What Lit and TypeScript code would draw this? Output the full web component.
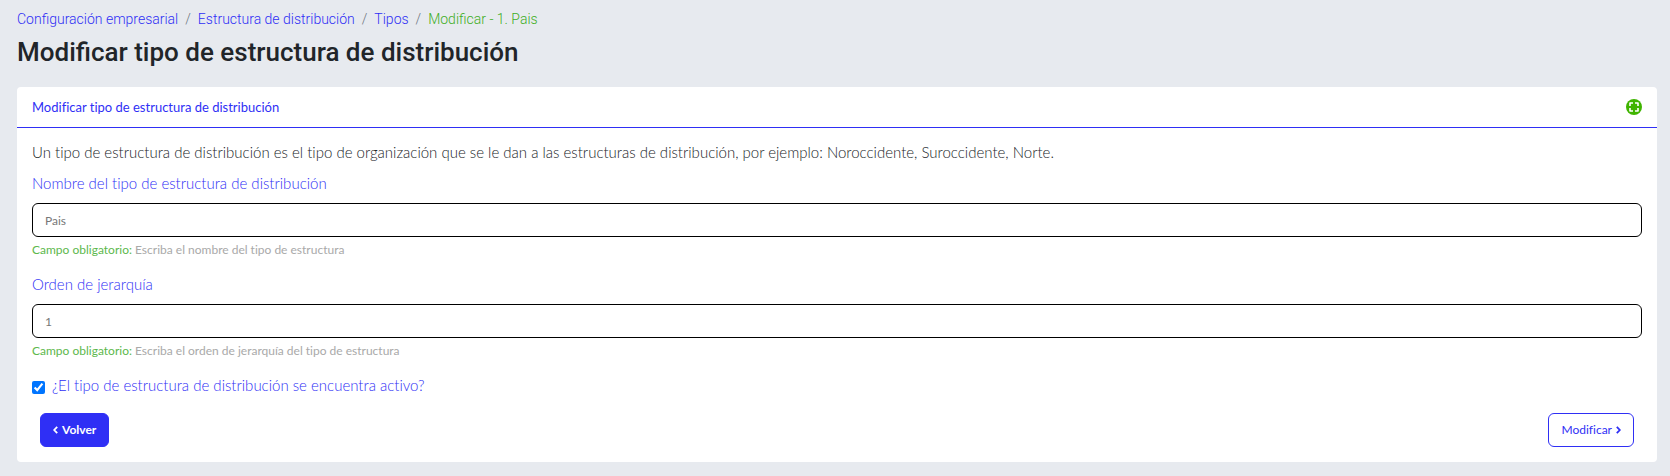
import { LitElement, html, css } from "lit";
import { customElement, property, state } from "lit/decorators.js";

@customElement("form-field")
class FormField extends LitElement {
  static styles = css`
    :host { display: block; }
    label { display: block; margin-bottom: 9px; font-size: 15px; line-height: 22px; color: #2f2ff5; }
    input {
      display: block; box-sizing: border-box; width: 100%; height: 34px; padding: 0 12px;
      border: 1px solid #000; border-radius: 6px; background: #fff;
      font: 400 12px/18px Lato, sans-serif; color: #777; outline: none;
    }
    .help { margin: 4px 0 0; font-size: 12px; line-height: 18px; font-weight: 400; color: #a9a9a9; }
    .required { color: #5cb84c; }
  `;
  @property() label = "";
  @property() value = "";
  @property() help = "";

  render() {
    return html`
      <label for="control">${this.label}</label>
      <input id="control" type="text" .value=${this.value} aria-describedby="help" />
      <p class="help" id="help"><span class="required">Campo obligatorio:</span> ${this.help}</p>
    `;
  }
}

@customElement("app-root")
class AppRoot extends LitElement {
  static styles = css`
    :host {
      display: block; box-sizing: border-box; min-height: 100vh; padding: 9px 13px 14px 17px;
      background: #e7eaef; color: #212529;
      font: 300 15px/22px Lato, sans-serif; font-variant-ligatures: none;
    }
    a { color: #2f2ff5; text-decoration: none; }
    .crumbs {
      display: flex; flex-wrap: wrap; gap: 7px; margin: 0; padding: 0; list-style: none;
      font: 300 14px/20px Roboto, sans-serif;
    }
    .crumbs li { display: flex; gap: 7px; }
    .crumbs li + li::before { content: "/"; color: #6c757d; }
    .current { color: #3fae1f; }
    h1 { margin: 6px 0 18px; font: 500 26px/34px Roboto, sans-serif; }
    .card { border-radius: 4px; background: #fff; }
    .head {
      display: flex; align-items: center; justify-content: space-between;
      height: 40px; padding: 0 15px; border-bottom: 1px solid #2f2ff5;
    }
    h2 { margin: 0; font: 400 13px/20px Lato, sans-serif; font-variant-ligatures: none; color: #2f2ff5; }
    .focus { display: flex; padding: 0; border: 0; background: none; }
    form { display: flex; flex-direction: column; gap: 14px; padding: 13px 15px 15px; }
    .intro { margin: 0 0 -5px; }
    .active { display: flex; align-items: center; gap: 7px; color: #2f2ff5; }
    .active input { width: 13px; height: 13px; margin: 4px 0 0; accent-color: #0075ff; }
    .actions { display: flex; justify-content: space-between; padding: 3px 8px 0; }
    .btn {
      display: flex; align-items: center; gap: 4px; box-sizing: border-box; height: 34px; padding: 0 12px;
      border: 1px solid #2f2ff5; border-radius: 6px; background: #fff; color: #2f2ff5;
      font: 400 12px/18px Lato, sans-serif; font-variant-ligatures: none;
    }
    .primary { background: #2f2ff5; color: #fff; font-weight: 700; }
  `;
  @state() private active = true;

  render() {
    return html`
      <nav aria-label="Ruta">
        <ol class="crumbs">
          <li><a href="#">Configuración empresarial</a></li>
          <li><a href="#">Estructura de distribución</a></li>
          <li><a href="#">Tipos</a></li>
          <li><span class="current" aria-current="page">Modificar - 1. Pais</span></li>
        </ol>
      </nav>
      <h1>Modificar tipo de estructura de distribución</h1>
      <section class="card">
        <header class="head">
          <h2>Modificar tipo de estructura de distribución</h2>
          <button class="focus" type="button" aria-label="Pantalla completa">
            <svg width="16" height="16" viewBox="0 0 16 16">
              <circle cx="8" cy="8" r="8" fill="#3fb400" />
              <path d="M4 7V4H7M9 4H12V7M12 9V12H9M7 12H4V9" fill="none" stroke="#fff" stroke-width="1.6" stroke-linejoin="round" />
            </svg>
          </button>
        </header>
        <form @submit=${(e: Event) => e.preventDefault()}>
          <p class="intro">Un tipo de estructura de distribución es el tipo de organización que se le dan a las estructuras de distribución, por ejemplo: Noroccidente, Suroccidente, Norte.</p>
          <form-field label="Nombre del tipo de estructura de distribución" value="Pais" help="Escriba el nombre del tipo de estructura"></form-field>
          <form-field label="Orden de jerarquía" value="1" help="Escriba el orden de jerarquía del tipo de estructura"></form-field>
          <label class="active">
            <input type="checkbox" .checked=${this.active} @change=${(e: Event) => (this.active = (e.target as HTMLInputElement).checked)} />
            <span>¿El tipo de estructura de distribución se encuentra activo?</span>
          </label>
          <div class="actions">
            <button class="btn primary" type="button">
              <svg width="5" height="8" viewBox="0 0 5 8"><path d="M4.2 0.8L1.2 4L4.2 7.2" fill="none" stroke="currentColor" stroke-width="1.8" /></svg>
              Volver
            </button>
            <button class="btn" type="submit">
              Modificar
              <svg width="5" height="8" viewBox="0 0 5 8"><path d="M0.8 0.8L3.8 4L0.8 7.2" fill="none" stroke="currentColor" stroke-width="1.8" /></svg>
            </button>
          </div>
        </form>
      </section>
    `;
  }
}
